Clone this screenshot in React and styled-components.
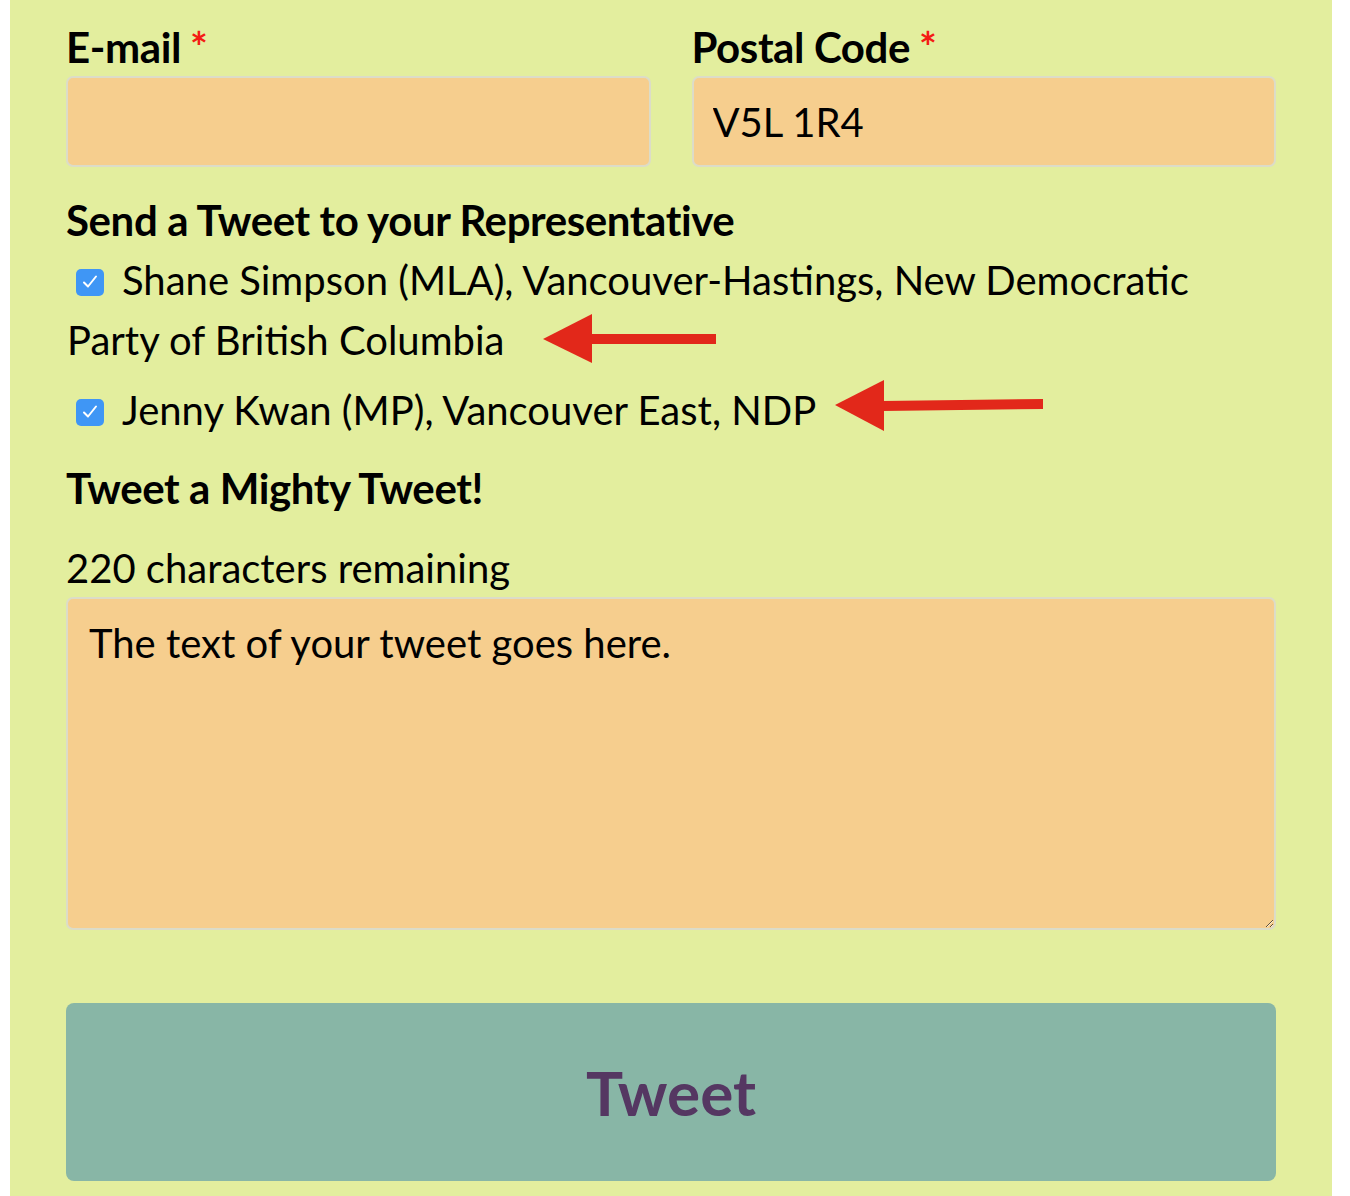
import React from 'react';
import styled, { createGlobalStyle } from 'styled-components';

const GlobalStyle = createGlobalStyle`
  body {
    margin: 0;
    background: #ffffff;
    font-family: Lato, "Open Sans", sans-serif;
    color: #000;
  }
`;

const Panel = styled.form`
  position: relative;
  margin-left: 10px;
  width: 1322px;
  min-height: 1196px;
  box-sizing: border-box;
  padding: 22px 56px 0;
  background: #e3ee9e;
`;

const Row = styled.div`
  display: grid;
  grid-template-columns: 1fr 1fr;
  gap: 41px;
`;

const Field = styled.div`
  display: flex;
  flex-direction: column;
`;

const Label = styled.label`
  font-weight: 700;
  font-size: 42px;
  line-height: 50px;
  letter-spacing: -0.4px;
  margin-bottom: 4px;
`;

const Star = styled.span`
  color: #f41c14;
  margin-left: 9px;
  font-size: 42px;
`;

const Input = styled.input`
  height: 91px;
  box-sizing: border-box;
  border: 2px solid #dcdcc8;
  border-radius: 7px;
  background: #f6ce8e;
  padding: 0 19px;
  font-family: Lato, sans-serif;
  font-size: 40px;
  color: #000;
  outline: none;
`;

const Heading = styled.h3`
  margin: 0;
  font-weight: 700;
  font-size: 42px;
  letter-spacing: -0.4px;
  line-height: 60px;
  margin-top: ${(p) => p.top}px;
`;

const Option = styled.label`
  display: block;
  padding-left: 1px;
  font-size: 40px;
  line-height: 60px;
  margin-bottom: 10px;
`;

const Box = styled.span`
  display: inline-flex;
  align-items: center;
  justify-content: center;
  width: 28px;
  height: 27px;
  margin: 0 18px 0 9px;
  border-radius: 5px;
  background: #3f96f5;
  vertical-align: 5px;
`;

const Counter = styled.div`
  font-size: 40px;
  line-height: 40px;
  margin-top: 30px;
`;

const TextArea = styled.textarea`
  display: block;
  width: 100%;
  height: 333px;
  box-sizing: border-box;
  margin-top: 9px;
  border: 2px solid #dcdcc8;
  border-radius: 7px;
  background: #f6ce8e;
  padding: 22px 21px;
  font-family: Lato, sans-serif;
  font-size: 40px;
  line-height: 44px;
  color: #000;
  outline: none;
`;

const Button = styled.button`
  display: block;
  width: 100%;
  height: 178px;
  margin-top: 73px;
  border: none;
  border-radius: 8px;
  background: #88b6a6;
  color: #553762;
  font-family: Lato, sans-serif;
  font-weight: 700;
  font-size: 62px;
`;

const Arrow = styled.svg`
  position: absolute;
  left: ${(p) => p.x}px;
  top: ${(p) => p.y}px;
`;

const Check = () => (
  <svg width="18" height="16" viewBox="0 0 18 16">
    <path d="M3 8.5 L7 12.5 L15 2.5" fill="none" stroke="#fff" strokeWidth="2" strokeLinecap="round" strokeLinejoin="round" />
  </svg>
);

const reps = [
  'Shane Simpson (MLA), Vancouver-Hastings, New Democratic Party of British Columbia',
  'Jenny Kwan (MP), Vancouver East, NDP',
];

export default function App() {
  return (
    <>
      <GlobalStyle />
      <Panel>
        <Row>
          <Field>
            <Label>E-mail<Star>*</Star></Label>
            <Input type="email" />
          </Field>
          <Field>
            <Label>Postal Code<Star>*</Star></Label>
            <Input defaultValue="V5L 1R4" />
          </Field>
        </Row>
        <Heading top={23}>Send a Tweet to your Representative</Heading>
        {reps.map((r) => (
          <Option key={r}>
            <Box><Check /></Box>
            {r}
          </Option>
        ))}
        <Heading top={18}>Tweet a Mighty Tweet!</Heading>
        <Counter>220 characters remaining</Counter>
        <TextArea defaultValue="The text of your tweet goes here." />
        <Button type="button">Tweet</Button>

        <Arrow x={533} y={314} width="175" height="50" viewBox="0 0 175 50">
          <polygon points="0,25 49,0 49,49" fill="#e2281a" />
          <rect x="48" y="20" width="125" height="10" fill="#e2281a" />
        </Arrow>
        <Arrow x={825} y={380} width="210" height="52" viewBox="0 0 210 52">
          <polygon points="0,25 49,0 49,51" fill="#e2281a" />
          <polygon points="48,21 208,19 208,29 48,31" fill="#e2281a" />
        </Arrow>
      </Panel>
    </>
  );
}
